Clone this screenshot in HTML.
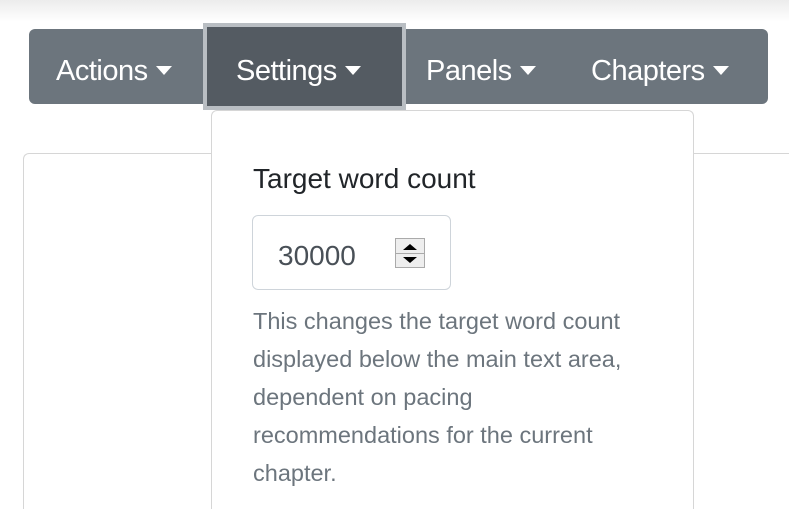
<!DOCTYPE html>
<html><head><style>
html,body{margin:0;width:789px;height:509px;overflow:hidden}
body{background:#fff;font-family:"Liberation Sans",sans-serif;position:relative}
.shadow{position:absolute;left:0;top:0;width:789px;height:22px;background:linear-gradient(#ececec,#fff)}
.nav{position:absolute;left:29px;top:29px;width:739px;height:75px;background:#6c757d;border-radius:6px}
.item{position:absolute;top:34px;height:75px;line-height:75px;color:#fff;font-size:29px;letter-spacing:-0.5px}
.caret{display:inline-block;width:0;height:0;border-left:8px solid transparent;border-right:8px solid transparent;border-top:9px solid #fff;vertical-align:middle;margin-left:8px;margin-top:-4px}
.active{position:absolute;left:203px;top:23px;width:195px;height:79px;border:4px solid #b9bec3;background:#545b62}
.card{position:absolute;left:23px;top:153px;width:766px;height:356px;border:1px solid #d6d6d6;border-right:none;border-bottom:none;border-radius:6px 0 0 0;box-sizing:border-box}
.menu{position:absolute;left:211px;top:110px;width:483px;height:399px;border:1px solid #d6d6d6;border-bottom:none;border-radius:6px 6px 0 0;background:#fff;box-sizing:border-box}
.label{position:absolute;left:253px;top:163px;font-size:28px;color:#212529}
.input{position:absolute;left:252px;top:215px;width:199px;height:75px;border:1px solid #ced4da;border-radius:6px;box-sizing:border-box}
.num{position:absolute;left:278px;top:240px;font-size:28px;color:#495057}
.spin{position:absolute;left:395px;top:238px;width:30px;height:30px;border:1px solid #aaa;background:#eee;box-sizing:border-box}
.help{position:absolute;left:253px;top:302px;font-size:23.5px;line-height:38px;color:#6c757d;white-space:nowrap}
</style></head><body>
<div class="shadow"></div>
<div class="card"></div>
<div class="nav"></div>
<div class="active"></div>
<div class="item" style="left:56px">Actions<span class="caret"></span></div>
<div class="item" style="left:236px">Settings<span class="caret"></span></div>
<div class="item" style="left:426px">Panels<span class="caret"></span></div>
<div class="item" style="left:591px">Chapters<span class="caret"></span></div>
<div class="menu"></div>
<div class="label">Target word count</div>
<div class="input"></div>
<div class="num">30000</div>
<div class="spin"><div style="position:absolute;left:7px;top:5px;border-left:7px solid transparent;border-right:7px solid transparent;border-bottom:6px solid #000"></div><div style="position:absolute;left:0;top:14px;width:28px;height:1px;background:#aaa"></div><div style="position:absolute;left:7px;top:18px;border-left:7px solid transparent;border-right:7px solid transparent;border-top:6px solid #000"></div></div>
<div class="help">This changes the target word count<br>displayed below the main text area,<br>dependent on pacing<br>recommendations for the current<br>chapter.</div>
</body></html>
